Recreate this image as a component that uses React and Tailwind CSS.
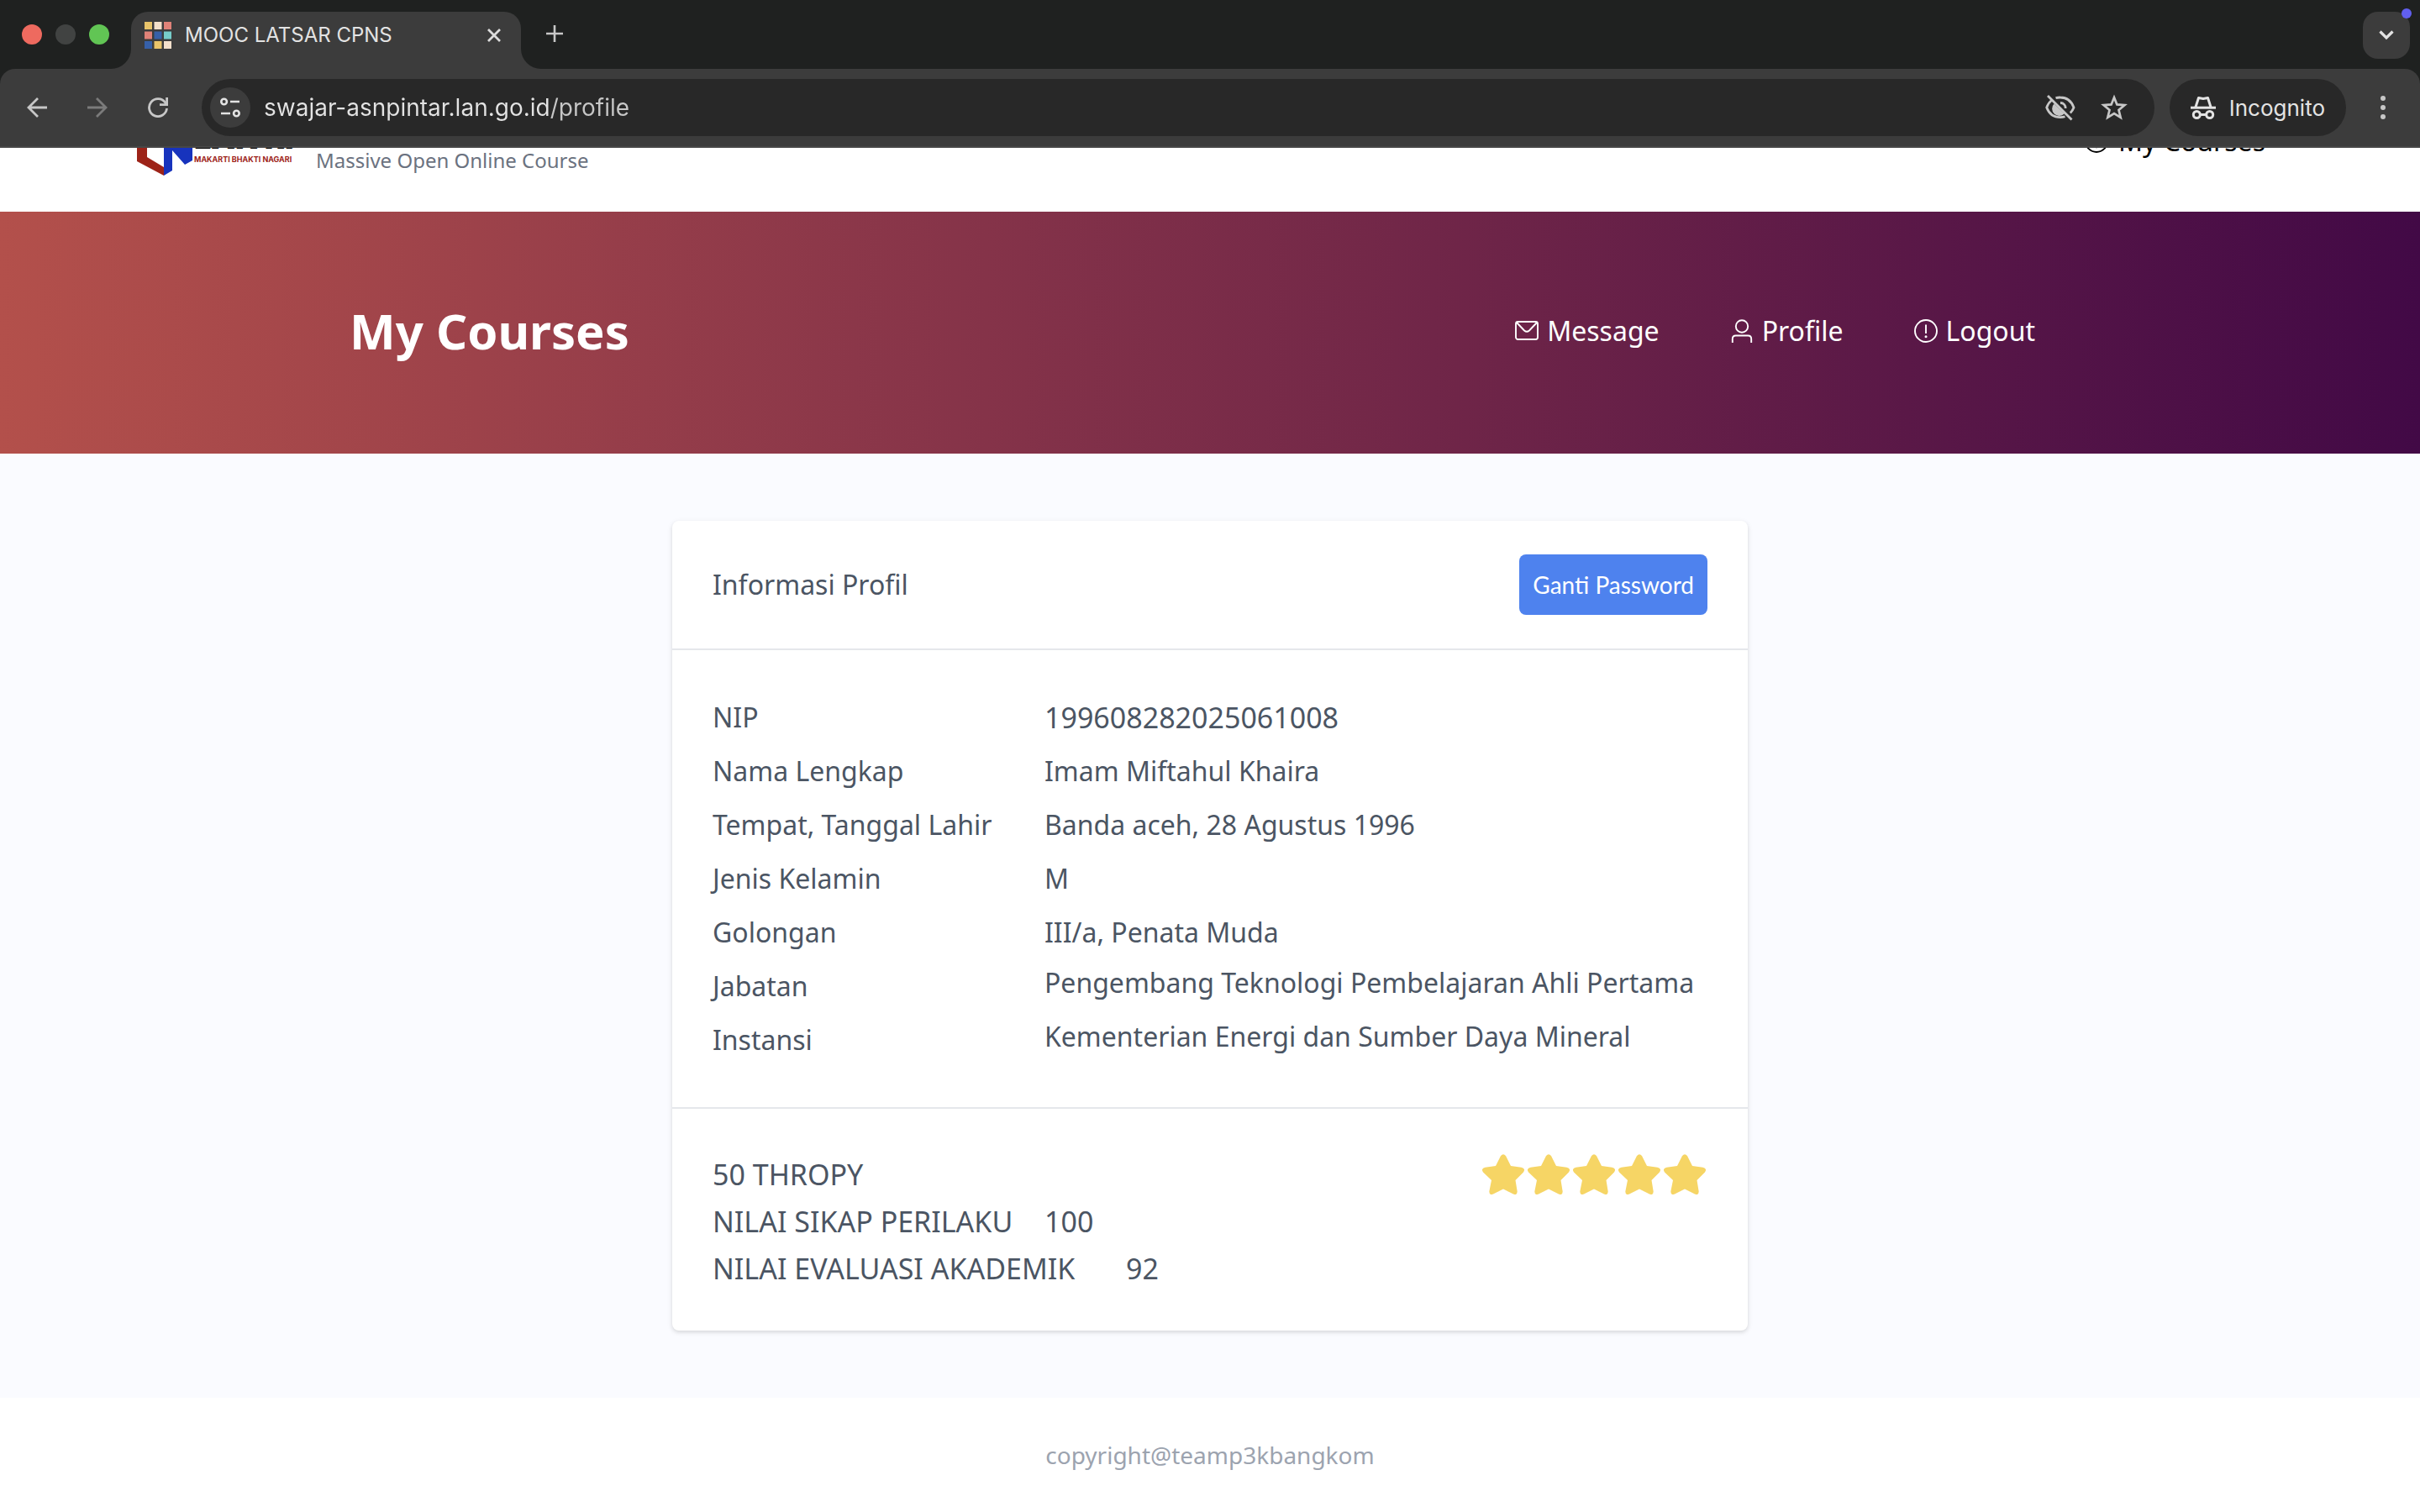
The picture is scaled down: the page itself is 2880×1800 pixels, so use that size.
const noto = "font-['Noto_Sans',sans-serif]";

const profile = [
  { label: "NIP", value: "199608282025061008", valueClass: "text-[34px]" },
  { label: "Nama Lengkap", value: "Imam Miftahul Khaira", valueClass: "" },
  { label: "Tempat, Tanggal Lahir", value: "Banda aceh, 28 Agustus 1996", valueClass: "" },
  { label: "Jenis Kelamin", value: "M", valueClass: "" },
  { label: "Golongan", value: "III/a, Penata Muda", valueClass: "" },
  { label: "Jabatan", value: "Pengembang Teknologi Pembelajaran Ahli Pertama", valueClass: "pb-2" },
  { label: "Instansi", value: "Kementerian Energi dan Sumber Daya Mineral", valueClass: "pb-2" },
];

const faviconColors = [
  "#e9c46a", "#f4e0cb", "#e08278",
  "#e08278", "#3660a8", "#76cdca",
  "#3660a8", "#e9c46a", "#f4e0cb",
];

function Favicon() {
  return (
    <svg className="size-8 shrink-0" viewBox="0 0 32 32" aria-hidden="true">
      {faviconColors.map((c, i) => (
        <rect key={i} x={(i % 3) * 11.5} y={Math.floor(i / 3) * 11.5} width="9" height="9" fill={c} />
      ))}
    </svg>
  );
}

function BackIcon() {
  return (
    <svg className="size-6" viewBox="0 0 24 24" fill="none" stroke="currentColor" strokeWidth="2.8">
      <path d="M24 12H2M13 1L2 12l11 11" />
    </svg>
  );
}

function ForwardIcon() {
  return (
    <svg className="size-6" viewBox="0 0 24 24" fill="none" stroke="currentColor" strokeWidth="2.8">
      <path d="M0 12h22M11 1l11 11-11 11" />
    </svg>
  );
}

function ReloadIcon() {
  return (
    <svg className="size-6" viewBox="0 0 24 24" fill="none" stroke="currentColor" strokeWidth="2.8">
      <path d="M22.5 13A10.5 10.5 0 1 1 20.6 6L22 8.4" />
      <path d="M22.6 0v8.6H14" />
    </svg>
  );
}

function TuneIcon() {
  return (
    <svg className="size-6" viewBox="0 0 24 24" fill="none" stroke="currentColor" strokeWidth="2.6">
      <circle cx="4.6" cy="5" r="3.3" />
      <path d="M12 5h11M1 19h11" />
      <circle cx="19.4" cy="19" r="3.3" />
    </svg>
  );
}

function EyeOffIcon() {
  return (
    <svg className="h-8 w-9" viewBox="0 0 36 32" fill="none" stroke="currentColor" strokeWidth="2.8">
      <path d="M12.500 4.700A17 17 0 0 1 18 4c7 0 13 4 16 12-1 2.600-2.400 4.800-4.200 6.500M7.500 7.500C4.800 9.500 3 12.300 1.700 16c3 8 9 11.600 16.300 11.600 2 0 3.800-.2 5.500-.8" />
      <path d="M10.500 11.500A8.500 8.500 0 0 0 22.800 23.300z" fill="currentColor" stroke="none" />
      <path d="M18 10.500a6 6 0 0 1 6.200 6.500" />
      <path d="M3 2l28.500 28.500" />
    </svg>
  );
}

function StarOutlineIcon() {
  return (
    <svg className="size-8" viewBox="0 0 32 32" fill="none" stroke="currentColor" strokeWidth="2.7">
      <path d="M16 4l3.400 8.400 9.100.700-7 5.900 2.200 8.900L16 23.100l-7.700 4.800 2.200-8.900-7-5.900 9.100-.700z" />
    </svg>
  );
}

function IncognitoIcon() {
  return (
    <svg className="h-7 w-[30px]" viewBox="0 0 30 28" fill="none" stroke="currentColor" strokeWidth="3">
      <path d="M0 14.200h30" />
      <path d="M5.800 14l3.700-11.500 5.500 1 5.500-1L24.200 14" strokeLinejoin="round" />
      <circle cx="7.300" cy="22.500" r="4" />
      <circle cx="22.700" cy="22.500" r="4" />
      <path d="M11 22.500h8" />
    </svg>
  );
}

function LogoMark() {
  return (
    <svg className="h-[60px] w-[66px] shrink-0" viewBox="0 0 66 60" aria-hidden="true">
      <path d="M0 0h12v38l20 12v10L0 43z" fill="#9d2318" />
      <path d="M32 0h34v42l-9 5-15-17v24l-10 6z" fill="#1733bd" />
    </svg>
  );
}

function MailIcon() {
  return (
    <svg className="size-7 shrink-0" viewBox="0 0 28 28" fill="none" stroke="currentColor" strokeWidth="1.900">
      <rect x="1" y="3" width="26" height="21" rx="2.500" />
      <path d="M2 4l9 9.500q3 2.500 6 0L26 4" />
    </svg>
  );
}

function UserIcon() {
  return (
    <svg className="size-7 shrink-0" viewBox="0 0 28 28" fill="none" stroke="currentColor" strokeWidth="1.900">
      <circle cx="14" cy="8.500" r="7.200" />
      <path d="M2.800 28v-4.500q0-4 4-4h14.400q4 0 4 4V28" />
    </svg>
  );
}

function AlertIcon() {
  return (
    <svg className="size-7 shrink-0" viewBox="0 0 28 28" fill="none" stroke="currentColor" strokeWidth="1.900">
      <circle cx="14" cy="14" r="13" />
      <path d="M14 6.500v10.500" />
      <circle cx="14" cy="20.700" r="1.500" fill="currentColor" stroke="none" />
    </svg>
  );
}

function Star() {
  return (
    <svg className="h-12 w-[50px]" viewBox="0 0 50 48" aria-hidden="true">
      <path
        fill="#f6d565"
        d="M22 2Q25-1.500 28 2L34 14 46.500 15.700Q52 17 49 21.500L39.500 31 41.700 44.500Q41.500 49.500 37 47.500L25 41.500 13 47.500Q8.500 49.500 8.300 44.500L11 31 1 21.500Q-2 17 3.500 15.700L16 14Z"
      />
    </svg>
  );
}

function TabStrip() {
  return (
    <div className="flex h-[82px] items-end bg-[#1f2120]">
      <div className="flex h-full w-[132px] shrink-0 items-center gap-4 pl-[26px]">
        <span className="size-6 rounded-full bg-[#ee6a5f]" />
        <span className="size-6 rounded-full bg-[#414342]" />
        <span className="size-6 rounded-full bg-[#61c554]" />
      </div>
      <svg className="size-6 shrink-0" viewBox="0 0 24 24" aria-hidden="true">
        <path d="M24 0v24H0A24 24 0 0 0 24 0z" fill="#3c3c3c" />
      </svg>
      <div className="flex h-[68px] w-[464px] shrink-0 items-center rounded-t-[20px] bg-[#3c3c3c] pr-6 pb-3 pl-4">
        <Favicon />
        <span className="ml-4 flex-1 text-2xl leading-8 text-[#e3e3e3]">MOOC LATSAR CPNS</span>
        <button type="button" aria-label="Close tab" className="text-[#dcdcdc]">
          <svg className="size-4" viewBox="0 0 16 16" fill="none" stroke="currentColor" strokeWidth="2.800">
            <path d="M1 1l14 14M15 1L1 15" />
          </svg>
        </button>
      </div>
      <svg className="size-6 shrink-0" viewBox="0 0 24 24" aria-hidden="true">
        <path d="M0 0v24h24A24 24 0 0 1 0 0z" fill="#3c3c3c" />
      </svg>
      <button type="button" aria-label="New tab" className="ml-1 flex h-full items-center px-0.5 pb-0.5 text-[#c7c7c7]">
        <svg className="size-5" viewBox="0 0 20 20" fill="none" stroke="currentColor" strokeWidth="2.600">
          <path d="M10 0v20M0 10h20" />
        </svg>
      </button>
      <div className="relative mr-3 mb-3 ml-auto">
        <button
          type="button"
          aria-label="Search tabs"
          className="flex size-14 items-center justify-center rounded-[18px] bg-[#3c3c3c] text-[#e3e3e3]"
        >
          <svg className="h-3 w-[18px]" viewBox="0 0 18 12" fill="none" stroke="currentColor" strokeWidth="3.200">
            <path d="M1.500 1.500L9 9l7.500-7.500" />
          </svg>
        </button>
        <span className="absolute -top-1 -right-0.5 size-3 rounded-full bg-[#615fee]" />
      </div>
    </div>
  );
}

function Toolbar() {
  return (
    <div className="bg-[#1f2120]">
      <div className="flex h-[94px] items-center rounded-t-[18px] border-b-2 border-[#474747] bg-[#3c3c3c] pr-7 pl-8 text-[#c7c7c7]">
        <button type="button" aria-label="Back"><BackIcon /></button>
        <button type="button" aria-label="Forward" className="ml-12 text-[#7b7b7b]"><ForwardIcon /></button>
        <button type="button" aria-label="Reload" className="ml-12"><ReloadIcon /></button>
        <div className="ml-10 flex h-[68px] flex-1 items-center rounded-full bg-[#282828] pr-8 pl-2.5">
          <button
            type="button"
            aria-label="View site information"
            className="flex size-12 items-center justify-center rounded-full bg-[#3c3c3c] text-[#e3e3e3]"
          >
            <TuneIcon />
          </button>
          <input
            type="text"
            aria-label="Address"
            defaultValue="swajar-asnpintar.lan.go.id/profile"
            className="ml-4 min-w-0 flex-1 bg-[linear-gradient(to_right,#e3e3e3_340px,#c7c7c7_340px)] bg-clip-text text-[28px] leading-10 text-transparent outline-none"
          />
          <button type="button" aria-label="Third-party cookies blocked"><EyeOffIcon /></button>
          <button type="button" aria-label="Bookmark this tab" className="ml-[30px]"><StarOutlineIcon /></button>
        </div>
        <button
          type="button"
          className="ml-[18px] flex h-[68px] items-center gap-4 rounded-full bg-[#282828] px-[25px] text-[26px] text-[#e3e3e3]"
        >
          <IncognitoIcon />
          Incognito
        </button>
        <button type="button" aria-label="Menu" className="ml-7 flex w-8 justify-center">
          <svg className="h-7 w-1.5" viewBox="0 0 6 28" fill="currentColor">
            <circle cx="3" cy="3" r="3" />
            <circle cx="3" cy="14" r="3" />
            <circle cx="3" cy="25" r="3" />
          </svg>
        </button>
      </div>
    </div>
  );
}

function SiteHeader() {
  return (
    <header className="flex h-[76px] items-end justify-between overflow-hidden bg-white pr-[184px] pl-[163px]">
      <a href="#home" className="flex items-end pb-[43px]">
        <LogoMark />
        <span className="ml-0.5 flex w-[145px] flex-col pb-3">
          <span className="font-['Inter',sans-serif] text-4xl leading-[38px] font-black whitespace-nowrap text-black">LAN RI</span>
          <span className="font-['Inter',sans-serif] text-[9px] leading-[14px] font-bold whitespace-nowrap text-[#9d2318]">
            MAKARTI BHAKTI NAGARI
          </span>
        </span>
        <span className="text-2xl leading-9 text-[#6b7280]">Massive Open Online Course</span>
      </a>
      <a href="#courses" className="flex items-center gap-3 pb-[60px] text-[32px] leading-12 text-black">
        <AlertIcon />
        My Courses
      </a>
    </header>
  );
}

function Banner() {
  return (
    <section className="flex h-72 items-center bg-[linear-gradient(to_right,#b3504b,#420946)] pb-1 text-white">
      <div className="mx-auto flex w-full max-w-[2048px] items-center justify-between pr-[42px]">
        <h1 className="text-[58px] leading-[72px] font-bold">My Courses</h1>
        <nav className="flex gap-[84px] text-[32px] leading-12">
          <a href="#message" className="flex items-center gap-2.5"><MailIcon />Message</a>
          <a href="#profile" className="flex items-center gap-2.5"><UserIcon />Profile</a>
          <a href="#logout" className="flex items-center gap-2.5"><AlertIcon />Logout</a>
        </nav>
      </div>
    </section>
  );
}

function ProfileCard() {
  return (
    <section className="mx-auto w-full max-w-[1280px] rounded-lg bg-white text-[32px] text-[#4b5563] shadow-[0_2px_6px_rgba(0,0,0,0.1),0_2px_4px_rgba(0,0,0,0.06)]">
      <div className="flex items-center justify-between border-b-2 border-[#e5e7eb] px-12 py-10">
        <h2 className="leading-12">Informasi Profil</h2>
        <button
          type="button"
          className="h-[72px] rounded-lg bg-[#4e82ee] px-4 font-['Lato',sans-serif] text-[28px] text-white"
        >
          Ganti Password
        </button>
      </div>
      <dl className="border-b-2 border-[#e5e7eb] px-12 py-12">
        {profile.map((row) => (
          <div key={row.label} className="flex h-16 items-center leading-12">
            <dt className="w-[395px] shrink-0">{row.label}</dt>
            <dd className={row.valueClass}>{row.value}</dd>
          </div>
        ))}
      </dl>
      <div className="flex items-start justify-between px-12 pt-[50px] pb-[46px] text-[34px] leading-14">
        <div>
          <p>50 THROPY</p>
          <p className="flex"><span className="min-w-[395px]">NILAI SIKAP PERILAKU</span>100</p>
          <p className="flex"><span className="min-w-[492px]">NILAI EVALUASI AKADEMIK</span>92</p>
        </div>
        <div className="flex h-14 items-center gap-1 pr-0.5" role="img" aria-label="5 / 5">
          {[1, 2, 3, 4, 5].map((n) => <Star key={n} />)}
        </div>
      </div>
    </section>
  );
}

export default function App() {
  return (
    <div className="flex min-h-screen flex-col bg-white">
      <div className="font-['Inter',sans-serif]">
        <TabStrip />
        <Toolbar />
      </div>
      <div className={noto}>
        <SiteHeader />
        <Banner />
        <main className="bg-[#fafbff] py-20">
          <ProfileCard />
        </main>
        <footer className="bg-white py-12 text-center text-[28px] leading-10 text-[#9ca3af]">
          copyright@teamp3kbangkom
        </footer>
      </div>
    </div>
  );
}
